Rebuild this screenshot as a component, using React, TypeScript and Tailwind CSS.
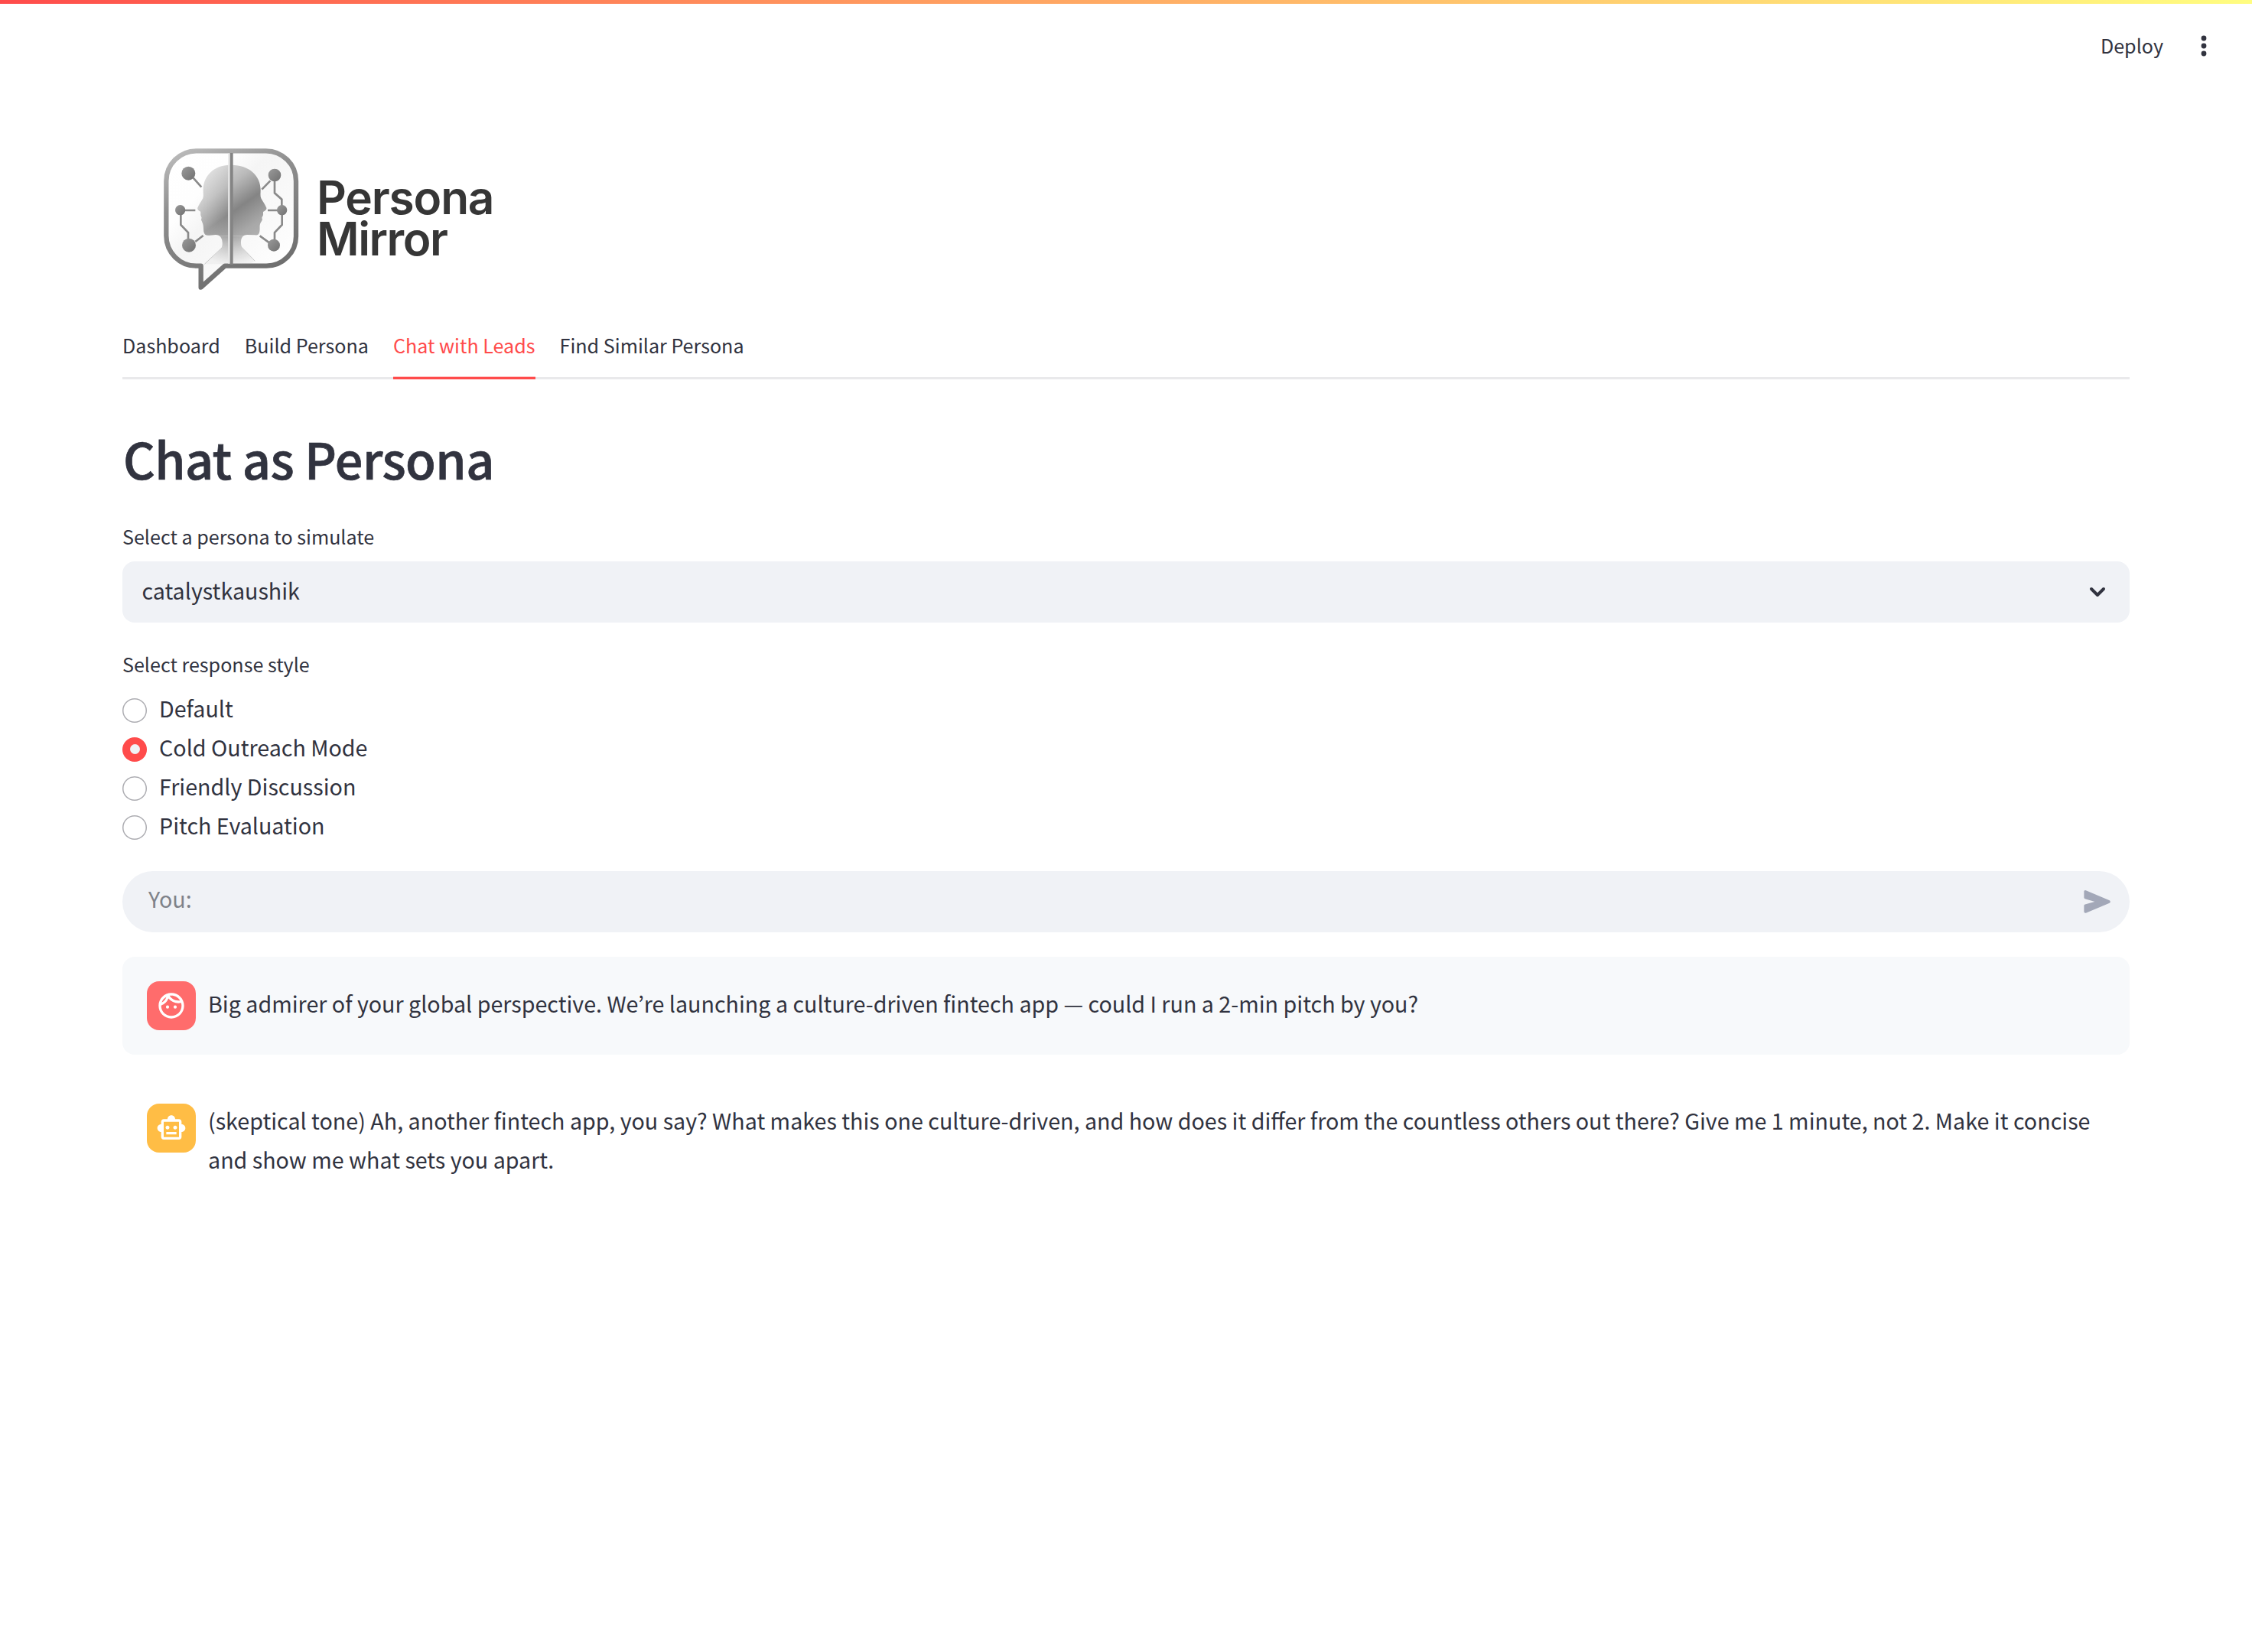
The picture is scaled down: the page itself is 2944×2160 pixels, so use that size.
import { MdOutlineFace, MdOutlineSmartToy } from "react-icons/md";

const tabs = ["Dashboard", "Build Persona", "Chat with Leads", "Find Similar Persona"];
const styles = ["Default", "Cold Outreach Mode", "Friendly Discussion", "Pitch Evaluation"];

const leftHead =
  "M362 137C300 137 257 180 257 235C257 250 259 258 256 268C250 280 240 292 235 305C233 312 240 317 247 320L247 334L251 344L249 352L255 366C259 376 257 385 259 398C261 410 268 414 280 413L306 411C324 411 331 425 332 440C333 455 330 464 320 474L262 526H362Z";
const rightHead =
  "M368 137C438 137 482 180 482 235C482 250 480 258 484 268C490 280 500 292 505 305C507 312 500 317 492 321L492 334L487 344L489 352L481 366C477 376 480 385 478 398C476 410 470 413 460 412L430 411C411 411 405 425 405 440C404 455 410 464 418 472L460 514L440 526H368Z";

function Logo() {
  return (
    <svg viewBox="0 0 1500 690" className="block h-[230px] w-[500px] blur-[0.7px]" aria-label="Persona Mirror">
      <defs>
        <linearGradient id="frame" gradientUnits="userSpaceOnUse" x1="180" y1="60" x2="420" y2="620">
          <stop offset="0" stopColor="#bdbdbd" />
          <stop offset="0.35" stopColor="#8f8f8f" />
          <stop offset="1" stopColor="#6c6c6c" />
        </linearGradient>
        <linearGradient id="glass" gradientUnits="userSpaceOnUse" x1="120" y1="90" x2="600" y2="530">
          <stop offset="0" stopColor="#ffffff" />
          <stop offset="0.3" stopColor="#fefefe" />
          <stop offset="0.45" stopColor="#f5f5f5" />
          <stop offset="0.7" stopColor="#f9f9f9" />
          <stop offset="1" stopColor="#ffffff" />
        </linearGradient>
        <linearGradient id="head" gradientUnits="userSpaceOnUse" x1="230" y1="170" x2="440" y2="470">
          <stop offset="0" stopColor="#e0e0e0" />
          <stop offset="0.3" stopColor="#bababa" />
          <stop offset="0.56" stopColor="#848484" />
          <stop offset="0.8" stopColor="#a8a8a8" />
          <stop offset="1" stopColor="#b4b4b4" />
        </linearGradient>
        <linearGradient id="shade" gradientUnits="userSpaceOnUse" x1="230" y1="0" x2="368" y2="0">
          <stop offset="0" stopColor="#fff" stopOpacity="0.3" />
          <stop offset="1" stopColor="#fff" stopOpacity="0" />
        </linearGradient>
        <radialGradient id="fade" gradientUnits="userSpaceOnUse" cx="368" cy="330" r="215">
          <stop offset="0.4" stopColor="#fff" />
          <stop offset="0.92" stopColor="#fff" stopOpacity="0.12" />
        </radialGradient>
        <mask id="neck" maskUnits="userSpaceOnUse" x="200" y="100" width="340" height="440">
          <rect x="200" y="100" width="340" height="315" fill="#fff" />
          <rect x="200" y="415" width="340" height="125" fill="url(#fade)" />
        </mask>
        <linearGradient id="node" x1="0" y1="0" x2="1" y2="1">
          <stop offset="0" stopColor="#9a9a9a" />
          <stop offset="1" stopColor="#707070" />
        </linearGradient>
      </defs>
      <path
        d="M342 533H505A116 116 0 0 0 621 417V200A118 118 0 0 0 503 82H230A118 118 0 0 0 112 200V415A118 118 0 0 0 230 533H248V617Z"
        fill="url(#glass)"
        stroke="url(#frame)"
        strokeWidth="19"
        strokeLinejoin="round"
      />
      <g mask="url(#neck)">
        <path d={leftHead} fill="url(#head)" />
        <path d={leftHead} fill="url(#shade)" />
        <path d={rightHead} fill="url(#head)" />
      </g>
      <path d="M330 462L262 526M408 460L460 514" fill="none" stroke="#c8c8c8" strokeWidth="3" />
      <path d="M358 92V524" stroke="#e9e9e9" strokeWidth="7" />
      <path d="M368 90V528" stroke="#848484" strokeWidth="12" />
      <path
        d="M218 188L250 224M186 315H226M169 330V372L198 402V430M226 438L257 414M520 199L487 233M537 200V247L565 272V300M510 315H550M566 330V372L537 402V432M516 442L479 415"
        fill="none"
        stroke="#8a8a8a"
        strokeWidth="8"
      />
      <g fill="url(#node)">
        <circle cx="199" cy="170" r="27" />
        <circle cx="167" cy="314" r="20" />
        <circle cx="201" cy="452" r="27" />
        <circle cx="537" cy="177" r="25" />
        <circle cx="566" cy="314" r="20" />
        <circle cx="534" cy="452" r="24" />
      </g>
      <g fill="#363636" fontFamily="Inter, sans-serif" fontWeight="600" fontSize="181">
        <text x="702" y="329" letterSpacing="-3.5">Persona</text>
        <text x="702" y="493" letterSpacing="-4.4">Mirror</text>
      </g>
    </svg>
  );
}

export default function App() {
  return (
    <div className="min-h-[2160px] w-full bg-white font-['Noto_Sans_CJK_KR',sans-serif] text-[28.67px] text-[#31333f]">
      <div className="h-[5px] bg-linear-to-r from-[#ff4b4b] to-[#fffd80]" />
      <header className="flex h-[115px] items-center justify-end pr-[52px] pb-[7px]">
        <span className="text-[25.1px] leading-10">Deploy</span>
        <svg viewBox="0 0 22 34" className="mt-px ml-[42px] h-[34px] w-[22px]" fill="#31333f">
          <circle cx="11" cy="7" r="3.4" />
          <circle cx="11" cy="17" r="3.4" />
          <circle cx="11" cy="27" r="3.4" />
        </svg>
      </header>

      <main className="px-40">
        <div className="pt-[50px] pl-5">
          <Logo />
        </div>

        <nav className="mt-4 flex h-20 gap-8 border-b-[3px] border-[#e9e9eb] pt-[15px] text-[25.1px] leading-10">
          {tabs.map((t) => (
            <span
              key={t}
              className={
                t === "Chat with Leads"
                  ? "relative text-[#ff4b4b] after:absolute after:inset-x-0 after:-bottom-[3px] after:h-1 after:border-t after:border-[#ffc3c3] after:bg-[#ff4b4b]"
                  : ""
              }
            >
              {t}
            </span>
          ))}
        </nav>

        <h1 className="mt-[63px] pl-px text-[64.8px] leading-20 font-medium tracking-[-0.55px] [-webkit-text-stroke:0.7px_#31333f]">
          Chat as Persona
        </h1>

        <p className="mt-[42px] text-[25.1px] leading-10">Select a persona to simulate</p>
        <div className="mt-[13px] flex h-20 items-center justify-between rounded-2xl bg-[#f0f2f6] pr-[31px] pl-[25.5px]">
          <span className="pb-[6px]">catalystkaushik</span>
          <svg viewBox="0 0 22 14" className="h-[14px] w-[22px]" fill="none" stroke="#31333f" strokeWidth="4" strokeLinecap="round" strokeLinejoin="round">
            <path d="M3 3L11 11L19 3" />
          </svg>
        </div>

        <p className="mt-[34px] text-[25.1px] leading-10">Select response style</p>
        <div className="mt-[15px] flex h-[205px] flex-col">
          {styles.map((s) => (
            <label key={s} className="flex flex-1 items-center gap-4">
              {s === "Cold Outreach Mode" ? (
                <span className="grid size-8 place-items-center rounded-full bg-[#ff4b4b]">
                  <span className="size-[13px] rounded-full bg-[#f0f2f6]" />
                </span>
              ) : (
                <span className="size-8 rounded-full shadow-[inset_0_0_0_1.5px_#adadb2]" />
              )}
              <span className="pb-[6px] leading-10">{s}</span>
            </label>
          ))}
        </div>

        <div className="mt-[31px] flex h-20 items-center justify-between rounded-full bg-[#f0f2f6] pr-6 pl-[34px]">
          <span className="pb-[9px] text-[#7f8289]">You:</span>
          <svg viewBox="0 0 37 32" className="h-8 w-[37px]" fill="#a3a8b8" stroke="#a3a8b8" strokeWidth="3.6" strokeLinejoin="round">
            <path d="M3.2 2.8V10.6L22 16.1L3.2 21.2V29L34 16Z" />
          </svg>
        </div>

        <div className="mt-8 flex gap-4 rounded-2xl bg-[#f7f9fb] p-8">
          <span className="grid size-16 shrink-0 place-items-center rounded-2xl bg-[#ff6c6c] text-white">
            <MdOutlineFace className="size-10" />
          </span>
          <p className="mt-[3px] leading-[51.2px]">
            Big admirer of your global perspective. We’re launching a culture-driven fintech app — could I run a 2-min pitch by you?
          </p>
        </div>

        <div className="mt-8 flex gap-4 p-8">
          <span className="grid size-16 shrink-0 place-items-center rounded-2xl bg-[#ffbd45] text-white">
            <MdOutlineSmartToy className="size-10" />
          </span>
          <p className="-mt-1 leading-[51.2px]">
            (skeptical tone) Ah, another fintech app, you say? What makes this one culture-driven, and how does it differ from the countless others out there? Give me 1 minute, not 2. Make it concise and show me what sets you apart.
          </p>
        </div>
      </main>
    </div>
  );
}
